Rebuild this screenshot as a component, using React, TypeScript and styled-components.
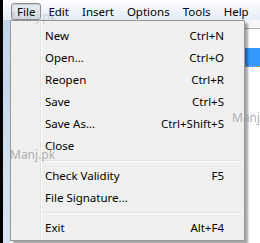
import styled, { createGlobalStyle } from 'styled-components';

type Entry = { label: string; shortcut?: string } | { separator: true };

const fileMenu: Entry[] = [
  { label: 'New', shortcut: 'Ctrl+N' },
  { label: 'Open...', shortcut: 'Ctrl+O' },
  { label: 'Reopen', shortcut: 'Ctrl+R' },
  { label: 'Save', shortcut: 'Ctrl+S' },
  { label: 'Save As...', shortcut: 'Ctrl+Shift+S' },
  { label: 'Close' },
  { separator: true },
  { label: 'Check Validity', shortcut: 'F5' },
  { label: 'File Signature...' },
  { separator: true },
  { label: 'Exit', shortcut: 'Alt+F4' },
];

const topMenus = ['File', 'Edit', 'Insert', 'Options', 'Tools', 'Help'];

const App = () => {
  return (
    <>
      <GlobalStyle />
      <Window>
        <Frame />
        <Main>
          <MenuBar>
            {topMenus.map((name, index) => (
              <MenuBarItem key={name} $active={index === 0}>
                {name}
              </MenuBarItem>
            ))}
          </MenuBar>
          <Body>
            <SideStrip />
            <Content>
              <Header />
              <ListRow />
              <ListRow $selected />
            </Content>
          </Body>

          <Dropdown>
            {fileMenu.map((entry, index) =>
              'separator' in entry ? (
                <Separator key={index} />
              ) : (
                <MenuRow key={index}>
                  <span>{entry.label}</span>
                  {entry.shortcut && <span>{entry.shortcut}</span>}
                </MenuRow>
              )
            )}
          </Dropdown>
        </Main>

        <Watermark $x={11} $y={10} $faint>
          Manj.pk
        </Watermark>
        <Watermark $x={10} $y={148}>Manj.pk</Watermark>
        <Watermark $x={232} $y={111}>Manj.pk</Watermark>
      </Window>
    </>
  );
};

const GlobalStyle = createGlobalStyle`
  html, body {
    margin: 0;
    padding: 0;
  }
  body {
    width: 260px;
    height: 243px;
    overflow: hidden;
    background: #ffffff;
    font-family: "Noto Sans", "Segoe UI", sans-serif;
    font-size: 11.5px;
    color: #000000;
  }
`;

const Window = styled.div`
  position: relative;
  display: flex;
  width: 260px;
  height: 243px;
  overflow: hidden;
`;

const Frame = styled.div`
  width: 3px;
  background: #000000;
`;

const Main = styled.div`
  position: relative;
  flex: 1;
  display: flex;
  flex-direction: column;
`;

const MenuBar = styled.div`
  height: 20px;
  box-sizing: border-box;
  padding: 3px 0 0 8px;
  display: flex;
  align-items: flex-start;
  background: linear-gradient(#fdfeff, #e4ecf7);
`;

const MenuBarItem = styled.div<{ $active?: boolean }>`
  height: 17px;
  box-sizing: border-box;
  padding: 0 5px;
  margin-right: 1px;
  line-height: 15px;
  border: 1px solid ${({ $active }) => ($active ? '#8c8e90' : 'transparent')};
  border-radius: 3px;
  background: ${({ $active }) =>
    $active ? 'linear-gradient(#e6eaef, #dde2e8)' : 'transparent'};
  box-shadow: ${({ $active }) =>
    $active ? 'inset 0 1px 1px rgba(0, 0, 0, 0.12)' : 'none'};
`;

const Body = styled.div`
  flex: 1;
  display: flex;
`;

const SideStrip = styled.div`
  width: 7px;
  background: linear-gradient(#c3d5eb, #d9e4f1);
`;

const Content = styled.div`
  flex: 1;
  background: #ffffff;
`;

const Header = styled.div`
  height: 8px;
  background: #f6f7f8;
  border-bottom: 1px solid #a9b0b8;
`;

const ListRow = styled.div<{ $selected?: boolean }>`
  height: 19px;
  box-sizing: border-box;
  background: ${({ $selected }) => ($selected ? '#3399ff' : '#ffffff')};
  border-bottom: 1px dotted
    ${({ $selected }) => ($selected ? '#e8a040' : 'transparent')};
`;

const Dropdown = styled.div`
  position: absolute;
  top: 20px;
  left: 7px;
  width: 235px;
  box-sizing: border-box;
  padding: 3px 0 2px;
  border: 1px solid #979797;
  background: linear-gradient(
      to right,
      transparent 29px,
      #e2e3e3 29px,
      #e2e3e3 30px,
      #ffffff 30px,
      #ffffff 31px,
      transparent 31px
    ),
    #f0f0f0;
  box-shadow: 3px 3px 2px rgba(0, 0, 0, 0.35);
`;

const MenuRow = styled.div`
  height: 22px;
  display: flex;
  align-items: center;
  justify-content: space-between;
  padding: 0 20px 0 34px;
  white-space: nowrap;
`;

const Separator = styled.div`
  height: 8px;
  box-sizing: border-box;
  padding-top: 4px;
  margin: 0 2px 0 31px;

  &::before {
    content: '';
    display: block;
    height: 1px;
    background: #e0e0e0;
    border-bottom: 1px solid #ffffff;
  }
`;

const Watermark = styled.div<{ $x: number; $y: number; $faint?: boolean }>`
  position: absolute;
  left: ${({ $x }) => $x}px;
  top: ${({ $y }) => $y}px;
  font-size: 12px;
  line-height: 14px;
  color: ${({ $faint }) =>
    $faint ? 'rgba(120, 120, 120, 0.3)' : 'rgba(150, 150, 150, 0.75)'};
  pointer-events: none;
  white-space: nowrap;
`;

export default App;
